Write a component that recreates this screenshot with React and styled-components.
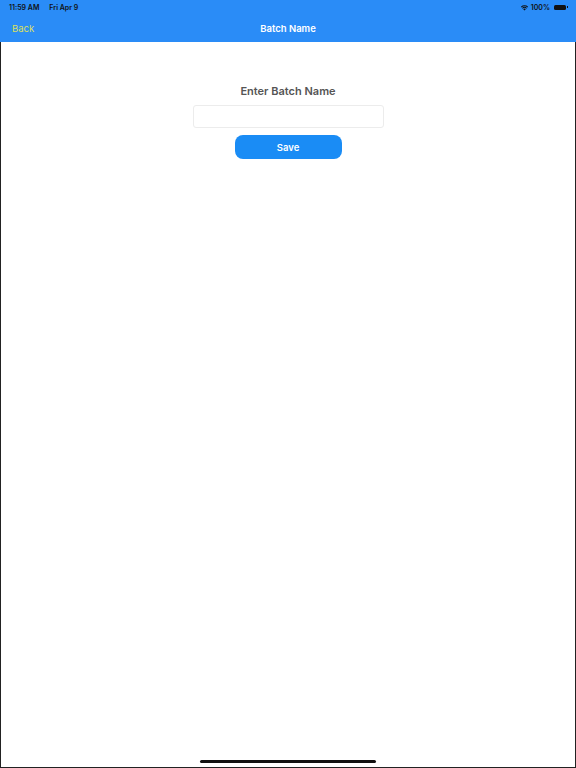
import styled, { createGlobalStyle } from "styled-components";

const GlobalStyle = createGlobalStyle`
  html, body {
    margin: 0;
    padding: 0;
    background: #ffffff;
  }
  body {
    font-family: Inter, "Noto Sans", "Liberation Sans", sans-serif;
  }
`;

const Screen = styled.div`
  width: 576px;
  height: 768px;
  display: flex;
  flex-direction: column;
  overflow: hidden;
`;

const Header = styled.header`
  height: 42px;
  background-color: #2a8cf7;
  display: flex;
  flex-direction: column;
`;

const StatusBar = styled.div`
  height: 14px;
  display: flex;
  align-items: center;
  justify-content: space-between;
  padding: 0 10px 0 9px;
  font-size: 7px;
  font-weight: 600;
  color: #111;
`;

const StatusLeft = styled.div`
  display: flex;
  gap: 10px;
`;

const StatusRight = styled.div`
  display: flex;
  align-items: center;
  gap: 2px;
`;

const Battery = styled.div`
  width: 12px;
  height: 5px;
  margin-left: 2px;
  border-radius: 1.5px;
  background: #111;
  position: relative;

  &::after {
    content: "";
    position: absolute;
    right: -2px;
    top: 1.5px;
    width: 1px;
    height: 2px;
    background: #111;
  }
`;

const NavBar = styled.div`
  flex: 1;
  display: grid;
  grid-template-columns: 1fr auto 1fr;
  align-items: center;
  padding: 0 12px;
  font-size: 9.5px;
`;

const BackLink = styled.span`
  color: #d9e05c;
`;

const NavTitle = styled.span`
  color: #ffffff;
  font-weight: 600;
`;

const Content = styled.main`
  flex: 1;
  border: 1px solid #222;
  border-top: none;
  display: flex;
  flex-direction: column;
  align-items: center;
  padding-top: 42px;
  position: relative;
`;

const Label = styled.div`
  font-size: 11px;
  font-weight: 600;
  color: #555;
  line-height: 14px;
`;

const Input = styled.input`
  box-sizing: border-box;
  width: 191px;
  height: 23px;
  margin-top: 7px;
  border: 1px solid #ececec;
  border-radius: 3px;
  outline: none;
`;

const SaveButton = styled.button`
  width: 107px;
  height: 24px;
  margin-top: 7px;
  border: none;
  border-radius: 8px;
  background-color: #1a8cf5;
  color: #ffffff;
  font-family: inherit;
  font-size: 9.5px;
  font-weight: 600;
`;

const HomeIndicator = styled.div`
  position: absolute;
  bottom: 4px;
  left: 50%;
  transform: translateX(-50%);
  width: 176px;
  height: 3px;
  border-radius: 2px;
  background: #111;
`;

function Wifi() {
  return (
    <svg width="9" height="7" viewBox="0 0 12 9">
      <path d="M6 8.5 4.3 6.7a2.4 2.4 0 0 1 3.4 0Z" fill="#111" />
      <path d="M2.8 5.2a4.5 4.5 0 0 1 6.4 0L8.3 6.1a3.2 3.2 0 0 0-4.6 0Z" fill="#111" />
      <path d="M1.2 3.6a6.8 6.8 0 0 1 9.6 0L9.9 4.5a5.5 5.5 0 0 0-7.8 0Z" fill="#111" />
    </svg>
  );
}

export default function App() {
  return (
    <Screen>
      <GlobalStyle />
      <Header>
        <StatusBar>
          <StatusLeft>
            <span>11:59 AM</span>
            <span>Fri Apr 9</span>
          </StatusLeft>
          <StatusRight>
            <Wifi />
            <span>100%</span>
            <Battery />
          </StatusRight>
        </StatusBar>
        <NavBar>
          <BackLink>Back</BackLink>
          <NavTitle>Batch Name</NavTitle>
          <span />
        </NavBar>
      </Header>
      <Content>
        <Label>Enter Batch Name</Label>
        <Input type="text" />
        <SaveButton>Save</SaveButton>
        <HomeIndicator />
      </Content>
    </Screen>
  );
}
